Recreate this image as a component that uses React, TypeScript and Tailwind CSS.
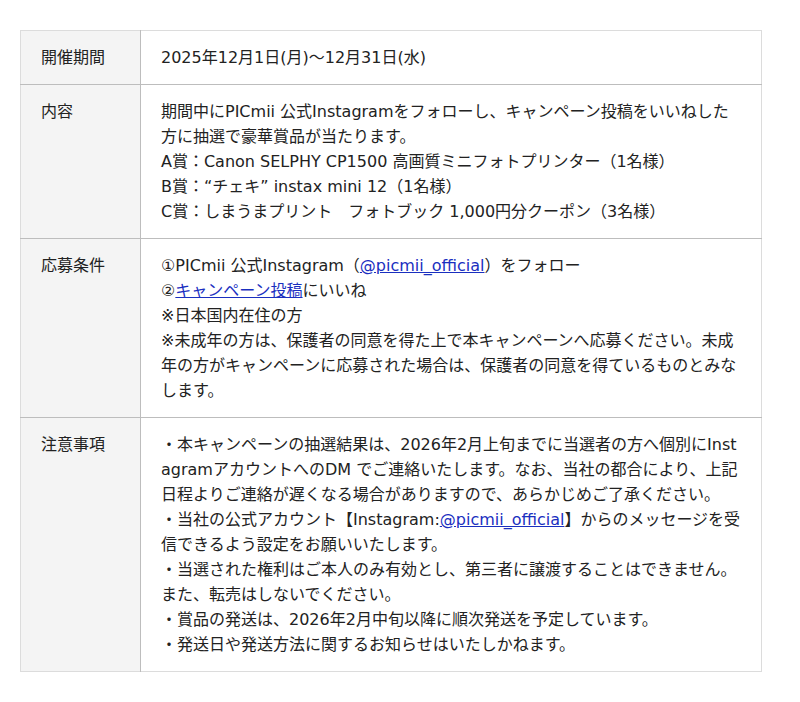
const rows: { label: string; body: React.ReactNode }[] = [
  {
    label: "開催期間",
    body: <>2025年12月1日(月)〜12月31日(水)</>,
  },
  {
    label: "内容",
    body: (
      <>
        期間中にPICmii 公式Instagramをフォローし、キャンペーン投稿をいいねした方に抽選で豪華賞品が当たります。
        <br />
        A賞：Canon SELPHY CP1500 高画質ミニフォトプリンター（1名様）
        <br />
        B賞：“チェキ” instax mini 12（1名様）
        <br />
        C賞：しまうまプリント　フォトブック 1,000円分クーポン（3名様）
      </>
    ),
  },
  {
    label: "応募条件",
    body: (
      <>
        ①PICmii 公式Instagram（<a href="#" className="text-[#1a2fbf] underline">@picmii_official</a>）をフォロー
        <br />
        ②<a href="#" className="text-[#1a2fbf] underline">キャンペーン投稿</a>にいいね
        <br />
        ※日本国内在住の方
        <br />
        ※未成年の方は、保護者の同意を得た上で本キャンペーンへ応募ください。未成年の方がキャンペーンに応募された場合は、保護者の同意を得ているものとみなします。
      </>
    ),
  },
  {
    label: "注意事項",
    body: (
      <>
        ・本キャンペーンの抽選結果は、2026年2月上旬までに当選者の方へ個別にInstagramアカウントへのDM でご連絡いたします。なお、当社の都合により、上記日程よりご連絡が遅くなる場合がありますので、あらかじめご了承ください。
        <br />
        ・当社の公式アカウント【Instagram:<a href="#" className="text-[#1a2fbf] underline">@picmii_official</a>】からのメッセージを受信できるよう設定をお願いいたします。
        <br />
        ・当選された権利はご本人のみ有効とし、第三者に譲渡することはできません。また、転売はしないでください。
        <br />
        ・賞品の発送は、2026年2月中旬以降に順次発送を予定しています。
        <br />
        ・発送日や発送方法に関するお知らせはいたしかねます。
      </>
    ),
  },
];

export default function App() {
  return (
    <div
      className="bg-white min-h-[702px] pl-[20px] pt-[30px] text-[16px] leading-[25px] text-[#222]"
      style={{ fontFamily: '"DejaVu Sans", "Noto Sans CJK JP", sans-serif' }}
    >
      <table className="w-[742px] border-collapse border border-[#dcdcdc]">
        <tbody>
          {rows.map((row) => (
            <tr key={row.label} className="border-b border-[#bdbdbd] last:border-b-[#dcdcdc]">
              <th className="w-[120px] bg-[#f4f4f4] border-r border-[#bdbdbd] px-[20px] py-[14px] text-left align-top font-normal">
                {row.label}
              </th>
              <td className="px-[20px] py-[14px] align-top break-all">{row.body}</td>
            </tr>
          ))}
        </tbody>
      </table>
    </div>
  );
}
